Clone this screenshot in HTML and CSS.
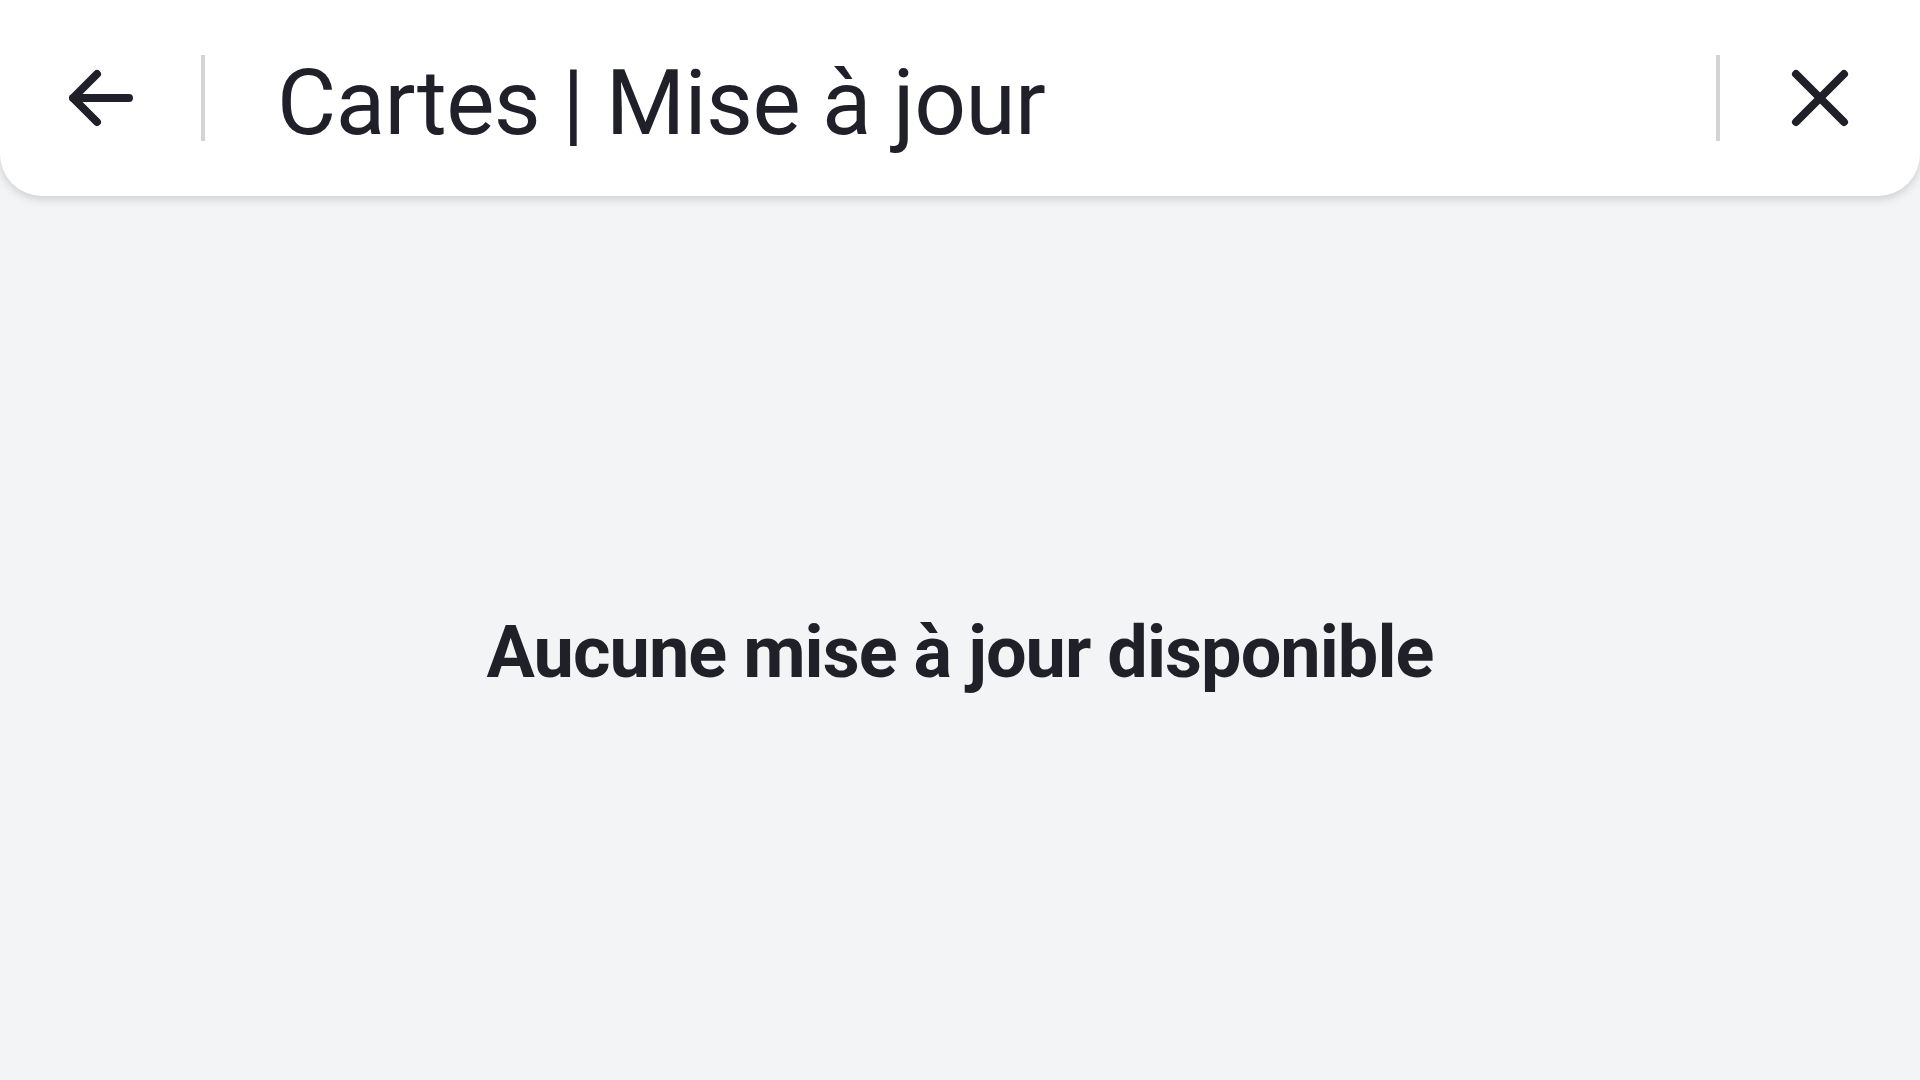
FILE: index.html
```html
<!DOCTYPE html>
<html lang="fr">
<head>
<meta charset="utf-8">
<title>Cartes | Mise à jour</title>
<link rel="stylesheet" href="styles.css">
</head>
<body>
<div class="app">
  <header class="topbar">
    <button class="icon-btn" aria-label="Retour">
      <svg class="icon-back" width="64" height="58" viewBox="0 0 64 58">
        <path d="M28 5 L4 29 L28 53 M4 29 H60" fill="none" stroke="#1f2028" stroke-width="8" stroke-linecap="round" stroke-linejoin="round"/>
      </svg>
    </button>
    <span class="divider"></span>
    <h1 class="title">Cartes | Mise à jour</h1>
    <span class="divider"></span>
    <button class="icon-btn" aria-label="Fermer">
      <svg class="icon-close" width="58" height="58" viewBox="0 0 58 58">
        <path d="M5 5 L53 53 M53 5 L5 53" fill="none" stroke="#1f2028" stroke-width="8" stroke-linecap="round"/>
      </svg>
    </button>
  </header>
  <main class="content">
    <p class="empty">Aucune mise à jour disponible</p>
  </main>
</div>
</body>
</html>
```
FILE: styles.css
```css
* { box-sizing: border-box; }
html, body {
  margin: 0;
  padding: 0;
  width: 1920px;
  height: 1080px;
  overflow: hidden;
  background: #f3f4f6;
  font-family: Roboto, "Noto Sans", "Liberation Sans", sans-serif;
  color: #1f2028;
}
.app {
  display: flex;
  flex-direction: column;
  height: 1080px;
}
.topbar {
  height: 196px;
  flex: 0 0 196px;
  background: #ffffff;
  border-radius: 0 0 42px 42px;
  box-shadow: 0 3px 10px rgba(0, 0, 0, 0.16);
  display: flex;
  align-items: center;
  position: relative;
  z-index: 1;
}
.icon-btn {
  width: 201px;
  height: 196px;
  flex: 0 0 201px;
  border: 0;
  background: transparent;
  padding: 0;
  display: flex;
  align-items: center;
  justify-content: center;
}
.icon-btn:last-child {
  width: 200px;
  flex-basis: 200px;
}
.divider {
  width: 4px;
  height: 86px;
  flex: 0 0 4px;
  background: #d4d4d4;
}
.title {
  flex: 1;
  margin: 0 0 0 72px;
  font-size: 91px;
  font-weight: 400;
  line-height: 1;
  padding-top: 10px;
  letter-spacing: -0.6px;
  white-space: nowrap;
}
.content {
  flex: 1;
  display: flex;
  align-items: center;
  justify-content: center;
  padding-top: 30px;
}
.empty {
  margin: 0;
  font-size: 72px;
  font-weight: 700;
  line-height: 1.2;
  letter-spacing: -0.95px;
}
```
